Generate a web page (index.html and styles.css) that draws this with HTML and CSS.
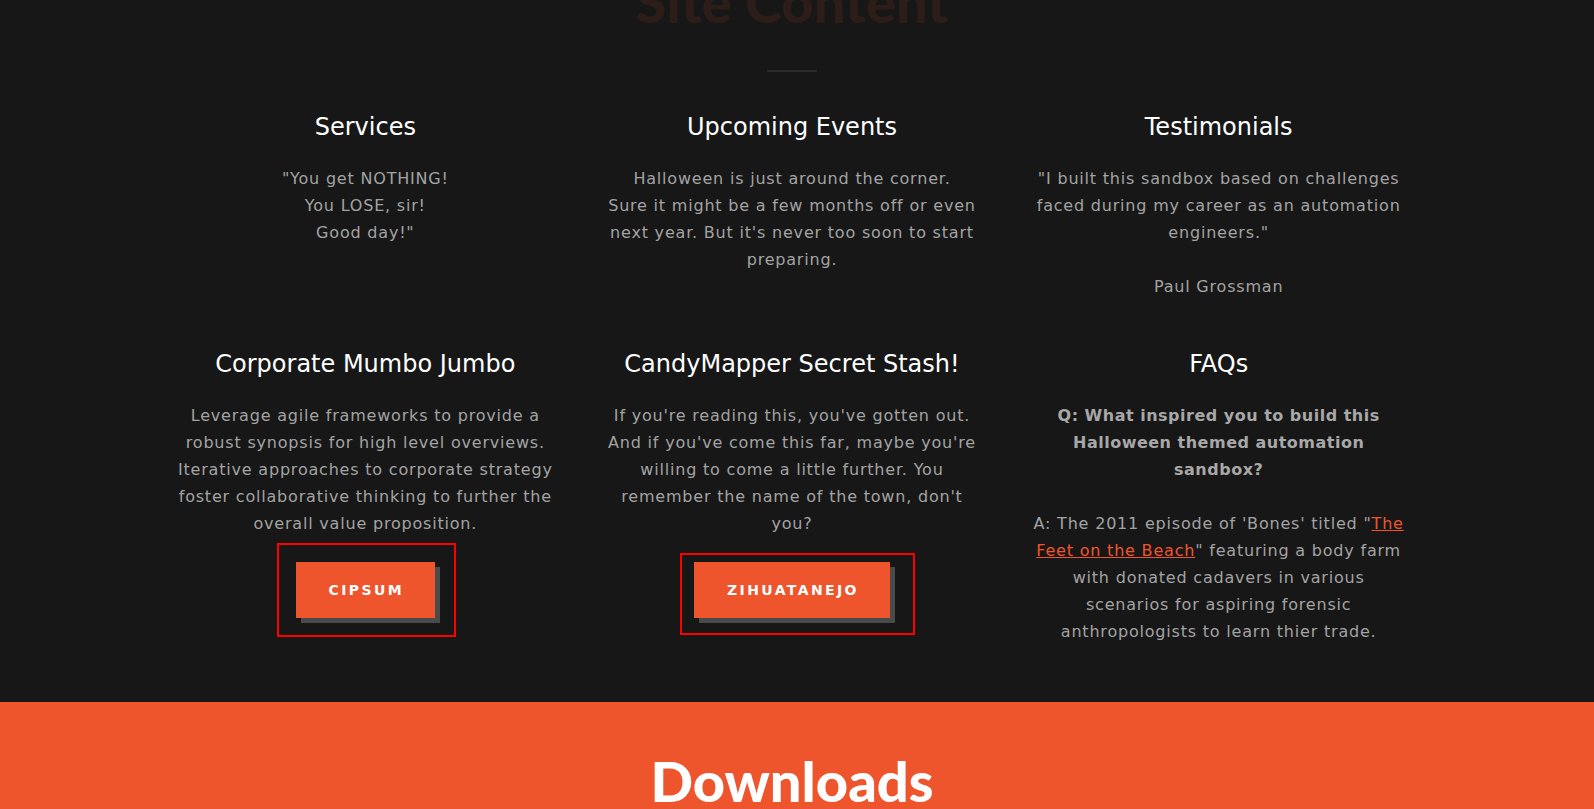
FILE: index.html
```html
<!DOCTYPE html>
<html lang="en">
<head>
<meta charset="utf-8">
<title>Site Content</title>
<link rel="stylesheet" href="styles.css">
</head>
<body>
<section class="content">
  <div class="inner">
    <h2 class="title title-fade">Site Content</h2>
    <hr class="divider">
    <div class="grid">
      <div class="col">
        <h4 class="col-title">Services</h4>
        <p class="col-text">"You get NOTHING!<br>You LOSE, sir!<br>Good day!"</p>
      </div>
      <div class="col">
        <h4 class="col-title">Upcoming Events</h4>
        <p class="col-text">Halloween is just around the corner.<br>Sure it might be a few months off or even<br>next year. But it's never too soon to start<br>preparing.</p>
      </div>
      <div class="col">
        <h4 class="col-title">Testimonials</h4>
        <p class="col-text">"I built this sandbox based on challenges<br>faced during my career as an automation<br>engineers."<br><br>Paul Grossman</p>
      </div>
      <div class="col">
        <h4 class="col-title">Corporate Mumbo Jumbo</h4>
        <p class="col-text">Leverage agile frameworks to provide a<br>robust synopsis for high level overviews.<br>Iterative approaches to corporate strategy<br>foster collaborative thinking to further the<br>overall value proposition.</p>
        <div class="btn-wrap">
          <a class="btn" href="#">Cipsum</a>
          <span class="highlight highlight-a"></span>
        </div>
      </div>
      <div class="col">
        <h4 class="col-title">CandyMapper Secret Stash!</h4>
        <p class="col-text">If you're reading this, you've gotten out.<br>And if you've come this far, maybe you're<br>willing to come a little further. You<br>remember the name of the town, don't<br>you?</p>
        <div class="btn-wrap">
          <a class="btn" href="#">Zihuatanejo</a>
          <span class="highlight highlight-b"></span>
        </div>
      </div>
      <div class="col">
        <h4 class="col-title">FAQs</h4>
        <p class="col-text"><strong>Q: What inspired you to build this<br>Halloween themed automation<br>sandbox?</strong><br><br>A: The 2011 episode of 'Bones' titled "<a class="link" href="#">The<br>Feet on the Beach</a>" featuring a body farm<br>with donated cadavers in various<br>scenarios for aspiring forensic<br>anthropologists to learn thier trade.</p>
      </div>
    </div>
  </div>
</section>
<section class="downloads">
  <div class="inner">
    <h2 class="title">Downloads</h2>
  </div>
</section>
</body>
</html>
```
FILE: styles.css
```css
* { box-sizing: border-box; }
html, body { margin: 0; padding: 0; }
body {
  background: #171717;
  font-family: "DejaVu Sans", "Open Sans", sans-serif;
  overflow: hidden;
  height: 809px;
}
.inner {
  padding-right: 10px;
}
.title {
  margin: 0;
  font-family: Lato, "DejaVu Sans", sans-serif;
  font-weight: 900;
  font-size: 56px;
  line-height: 56px;
  text-align: center;
  color: #ffffff;
}
.title-fade {
  margin-top: -26px;
  color: transparent;
  background: linear-gradient(#2c1d18 49px, #ef552d 49px, #ef552d 52px, #2c1d18 52px);
  -webkit-background-clip: text;
  background-clip: text;
  display: block;
  width: 320px;
  margin-left: auto;
  margin-right: auto;
}
.divider {
  width: 50px;
  height: 2px;
  margin: 40px auto 0;
  border: 0;
  background: #2c2c2c;
}
.content {
  padding-bottom: 57px;
}
.grid {
  width: 1280px;
  margin: 41px auto 0;
  display: grid;
  grid-template-columns: repeat(3, 1fr);
  row-gap: 50px;
}
.col {
  padding: 0 8px;
  text-align: center;
}
.col-title {
  margin: 0;
  font-size: 24px;
  line-height: 28.8px;
  font-weight: 400;
  color: #ffffff;
}
.col-text {
  margin: 23px 0 0;
  font-size: 16px;
  letter-spacing: 0.8px;
  line-height: 27px;
  color: #a3a3a3;
}
.col-text strong {
  font-weight: 700;
  letter-spacing: 0.5px;
  color: #a8a8a8;
}
.link {
  color: #ef552d;
  text-decoration: underline;
}
.btn-wrap {
  position: relative;
  display: inline-block;
  margin-top: 25px;
}
.btn {
  display: block;
  height: 56px;
  line-height: 56px;
  padding: 0 31px 0 33px;
  background: #ef552d;
  color: #ffffff;
  text-decoration: none;
  text-transform: uppercase;
  font-weight: 700;
  font-size: 14px;
  letter-spacing: 2.4px;
  box-shadow: 5px 5px 0 #4a4a4a;
}
.highlight {
  position: absolute;
  border: 2px solid #ff0000;
  pointer-events: none;
}
.highlight-a { top: -19px; left: -19px; right: -21px; bottom: -19px; }
.highlight-b { top: -9px; left: -14px; right: -25px; bottom: -17px; }
.downloads {
  background: #ef552d;
  padding-top: 51px;
  height: 120px;
  overflow: hidden;
}
```
